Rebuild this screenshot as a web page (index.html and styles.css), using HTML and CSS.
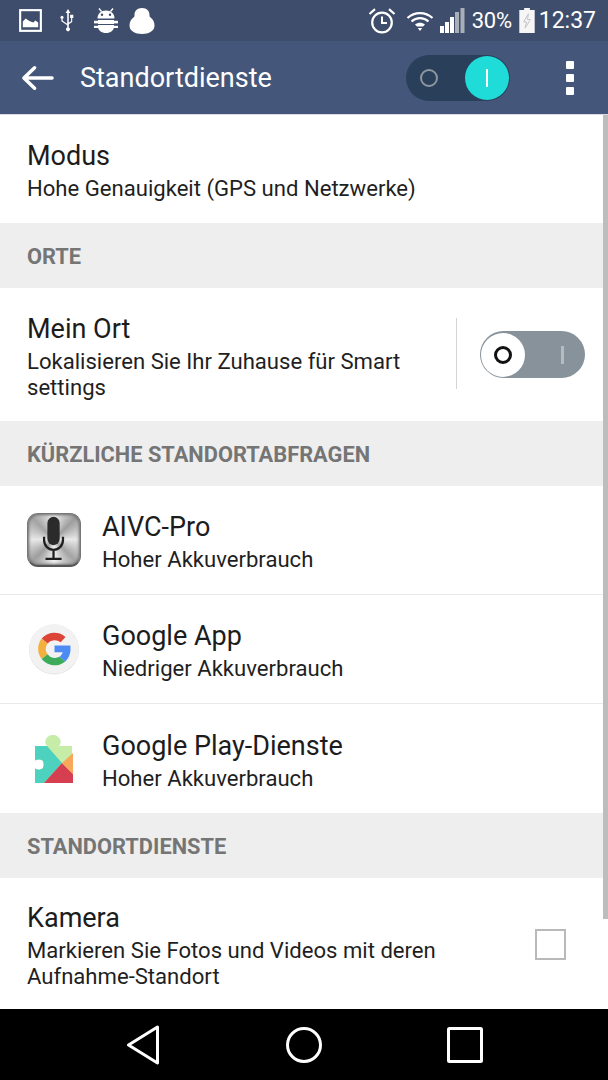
FILE: index.html
```html
<!DOCTYPE html>
<html lang="de">
<head>
  <meta charset="UTF-8" />
  <meta name="viewport" content="width=device-width, initial-scale=1.0"/>
  <title>Standortdienste</title>
  <link rel="stylesheet" href="styles.css">
</head>
<body>
  <div class="screen">
    <div class="status-bar">
      <div class="status-left">
        <svg class="ic-picture" viewBox="0 0 24 24"><rect x="1.2" y="1.2" width="21.6" height="21.6" fill="none" stroke="#fff" stroke-width="2.2"/><path d="M4 19v-6l3-3 3 2 2 1 3 1 2-2 3 2v5z" fill="#fff"/></svg>
        <svg class="ic-usb" viewBox="0 0 16 26"><path d="M8 1 5.6 5h1.6v14.5a1.9 1.9 0 1 0 1.6 0V16.2l3.4-2.2V10h1.1V6.8h-3.2V10h1v3.2l-2.3 1.5V5h1.6zM4.1 13.7 2.6 12.6v-1.9a1.5 1.5 0 1 0-1.2 0v2.5l5.8 4v-1.5z" fill="#fff"/></svg>
        <svg class="ic-bug" viewBox="0 0 24 26">
          <path d="M5 .5 7.500 3.500M19 .5 16.500 3.500" stroke="#fff" stroke-width="1.400" fill="none"/>
          <path d="M3.500 10.500C3.500 5.500 7 2.500 12 2.500s8.500 3 8.500 8z" fill="#fff"/>
          <circle cx="8" cy="6.800" r="1.200" fill="#3f4d6c"/>
          <circle cx="16" cy="6.800" r="1.200" fill="#3f4d6c"/>
          <path d="M4 12h16v6.500c0 4-3.500 6.500-8 6.500s-8-2.500-8-6.500z" fill="#fff"/>
          <rect x="0" y="12.800" width="24" height="2.600" fill="#fff"/>
          <rect x="0" y="17.800" width="24" height="2.200" fill="#fff"/>
          <rect x="4" y="16" width="16" height="1" fill="#3f4d6c"/>
        </svg>
        <svg class="ic-blob" viewBox="0 0 26 28"><path d="M13 1C18 1 20.500 4 20.500 8 20.500 9 20.500 9.500 21 10 24 12 25.500 15 25.500 18.500 25.500 24 20 27 13 27S.5 24 .5 18.500C.5 15 2 12 5 10 5.500 9.500 5.500 9 5.500 8 5.500 4 8 1 13 1z" fill="#fff"/></svg>
      </div>
      <div class="status-right">
        <svg class="ic-alarm" viewBox="0 0 28 28"><circle cx="14" cy="15.500" r="9.800" fill="none" stroke="#fff" stroke-width="2.200"/><path d="M14 9.500v6.500h5" fill="none" stroke="#fff" stroke-width="2"/><path d="M1.500 7 7 2.200M26.500 7 21 2.200" stroke="#fff" stroke-width="2.200" fill="none"/></svg>
        <svg class="ic-wifi" viewBox="0 0 28 22"><path d="M1.500 8C8.500 1.500 19.500 1.500 26.500 8M5.500 11.500C10.500 7 17.500 7 22.500 11.500" fill="none" stroke="#fff" stroke-width="2.200"/><path d="M9 14.500c3-2.400 7-2.400 10 0l-2 2h-6z" fill="#fff"/><path d="M11.800 18h4.400L14 21z" fill="#fff"/></svg>
        <svg class="ic-signal" viewBox="0 0 25 25"><rect x="0" y="18" width="4" height="7" fill="#fff"/><rect x="5" y="14" width="4" height="11" fill="#fff"/><rect x="10" y="9" width="4" height="16" fill="#fff"/><rect x="15" y="4" width="4" height="21" fill="#a8afb9"/><rect x="20.500" y="0" width="4" height="25" fill="#a8afb9"/></svg>
        <span class="status-text pct">30%</span>
        <svg class="ic-battery" viewBox="0 0 16 26"><path d="M5 0h6v2h5v24H0V2h5z" fill="#f6f6f6"/><path d="M9.500 6 4.500 14.500h3L6 21l5.500-9h-3z" fill="none" stroke="#bfc3c8" stroke-width="1"/></svg>
        <span class="status-text">12:37</span>
      </div>
    </div>

    <div class="app-bar">
      <svg class="ic-back" viewBox="0 0 34 26"><path d="M14 2.500 3 13l11 10.500M3.500 13H32" fill="none" stroke="#fff" stroke-width="3.600" stroke-linecap="round" stroke-linejoin="round"/></svg>
      <div class="app-title">Standortdienste</div>
      <div class="switch-on">
        <span class="switch-o"></span>
        <span class="switch-knob"><i></i></span>
      </div>
      <div class="overflow"><i></i><i></i><i></i></div>
    </div>

    <div class="content">
      <div class="row row-plain">
        <div class="row-title">Modus</div>
        <div class="row-sub">Hohe Genauigkeit (GPS und Netzwerke)</div>
      </div>

      <div class="section">ORTE</div>

      <div class="row row-action">
        <div class="row-body">
          <div class="row-title">Mein Ort</div>
          <div class="row-sub">Lokalisieren Sie Ihr Zuhause für Smart settings</div>
        </div>
        <div class="divider-v"></div>
        <div class="switch-off">
          <span class="off-knob"><i></i></span>
          <span class="off-bar"></span>
        </div>
      </div>

      <div class="section">KÜRZLICHE STANDORTABFRAGEN</div>

      <div class="app-row">
        <div class="metal-icon">
          <svg viewBox="0 0 54 54">
            <rect x="20" y="3" width="13" height="30" rx="6.500" fill="#2b2b2b"/>
            <path d="M16.500 24v3.500c0 6 4.500 10.500 10 10.500s10-4.500 10-10.500V24M26.500 38v9M18 47.500h17" fill="none" stroke="#1f1f1f" stroke-width="2.400"/>
          </svg>
        </div>
        <div class="row-body">
          <div class="row-title">AIVC-Pro</div>
          <div class="row-sub">Hoher Akkuverbrauch</div>
        </div>
      </div>
      <div class="app-row">
        <svg class="app-icon" viewBox="0 0 54 54">
          <circle cx="27" cy="27.500" r="25" fill="#dedede"/>
          <circle cx="27" cy="27" r="24.800" fill="#f2f2f2"/>
          <path d="M38.500 15A16.500 16.500 0 0 0 14.700 16.500L20.500 21.500a9.500 9.500 0 0 1 13.200-1.200z" fill="#db4437"/>
          <path d="M14.700 16.500a16.500 16.500 0 0 0 0 20.500l5.800-4.800a9.500 9.500 0 0 1 0-10.700z" fill="#f4b03e"/>
          <path d="M14.700 37a16.500 16.500 0 0 0 23.600 2.500L32.500 34.800A9.500 9.500 0 0 1 20.500 32.200z" fill="#3dab5a"/>
          <path d="M27.500 23.500H43.300c.8 6-.4 11.500-5 16L32.500 34.800c1.500-1.200 2.600-2.600 3.200-4.600h-8.200z" fill="#4c8bf5"/>
        </svg>
        <div class="row-body">
          <div class="row-title">Google App</div>
          <div class="row-sub">Niedriger Akkuverbrauch</div>
        </div>
      </div>
      <div class="app-row app-row-last">
        <svg class="app-icon" viewBox="0 0 54 54">
          <path d="M8 14h12c-1.500-2-2-3.500-1.500-5.500 1-3.500 4-5.500 7.500-5.500s6.500 2 7.500 5.500c.5 2 0 3.500-1.500 5.500h13v37H8V36.500c2.500 1.500 5.500 1.500 7.500 0 1.500-1.500 1.500-6.500 0-8-2-1.500-5-1.500-7.500 0z" fill="#c5eda8"/>
          <path d="M8 14h12l15 17-18 20H8V36.500c2.500 1.500 5.500 1.500 7.500 0 1.500-1.500 1.500-6.500 0-8-2-1.500-5-1.500-7.500 0z" fill="#4dd2bf"/>
          <path d="M35 31 46 42v9H17z" fill="#d63f50"/>
          <path d="M35 31 46 21v21z" fill="#f9a85b"/>
        </svg>
        <div class="row-body">
          <div class="row-title">Google Play-Dienste</div>
          <div class="row-sub">Hoher Akkuverbrauch</div>
        </div>
      </div>

      <div class="section">STANDORTDIENSTE</div>

      <div class="row row-action row-camera">
        <div class="row-body">
          <div class="row-title">Kamera</div>
          <div class="row-sub">Markieren Sie Fotos und Videos mit deren Aufnahme-Standort</div>
        </div>
        <div class="checkbox"></div>
      </div>

      <div class="scrollbar"></div>
    </div>

    <div class="nav-bar">
      <svg class="nav-back" viewBox="0 0 34 40"><path d="M31.500 2 2.500 20l29 18z" fill="none" stroke="#fff" stroke-width="3" stroke-linejoin="round"/></svg>
      <svg class="nav-home" viewBox="0 0 36 36"><circle cx="18" cy="18" r="16.500" fill="none" stroke="#fff" stroke-width="3"/></svg>
      <svg class="nav-recent" viewBox="0 0 36 36"><rect x="1.500" y="1.500" width="33" height="33" rx="1" fill="none" stroke="#fff" stroke-width="3"/></svg>
    </div>
  </div>
</body>
</html>
```

FILE: styles.css
```css
* {
  box-sizing: border-box;
}

body {
  margin: 0;
  font-family: Roboto, 'Noto Sans', sans-serif;
  background: #fff;
  color: #1a1a1a;
}

.screen {
  width: 608px;
  height: 1080px;
  display: flex;
  flex-direction: column;
  overflow: hidden;
}

svg {
  display: block;
  flex: none;
}

/* status bar */
.status-bar {
  height: 41px;
  background: #3f4d6c;
  display: flex;
  justify-content: space-between;
  align-items: center;
  padding: 0 12px 0 19px;
  color: #fff;
}

.status-left,
.status-right {
  display: flex;
  align-items: center;
}

.ic-picture { width: 23px; height: 23px; margin-right: 18px; }
.ic-usb { width: 16px; height: 26px; margin-right: 18px; }
.ic-bug { width: 24px; height: 26px; margin-right: 11px; }
.ic-blob { width: 26px; height: 28px; }

.ic-alarm { width: 28px; height: 28px; margin-right: 10px; }
.ic-wifi { width: 28px; height: 22px; margin-right: 6px; }
.ic-signal { width: 25px; height: 25px; margin-right: 7px; }
.ic-battery { width: 16px; height: 25px; margin: 0 4px 0 7px; }

.status-text {
  font-size: 23px;
  line-height: 41px;
  white-space: nowrap;
}

.pct { font-size: 22px; letter-spacing: -0.3px; }

/* app bar */
.app-bar {
  height: 74px;
  flex: none;
  background: #44577a;
  display: flex;
  align-items: center;
  padding: 0 34px 0 21px;
  border-bottom: 1px solid #d8dce2;
  color: #fff;
}

.ic-back { width: 33px; height: 26px; margin-right: 26px; }

.app-title {
  flex: 1;
  font-size: 27px;
  padding-top: 1px;
}

.switch-on {
  width: 104px;
  height: 46px;
  border-radius: 23px;
  background: #2a3f5a;
  display: flex;
  justify-content: space-between;
  align-items: center;
  padding: 0 1px 0 14px;
  margin-right: 56px;
}

.switch-o {
  width: 18px;
  height: 18px;
  border: 2.5px solid #8e979f;
  border-radius: 50%;
}

.switch-knob {
  width: 44px;
  height: 44px;
  border-radius: 50%;
  background: #1fdcd9;
  display: flex;
  justify-content: center;
  align-items: center;
}

.switch-knob i {
  width: 2px;
  height: 18px;
  background: #fff;
}

.overflow {
  display: flex;
  flex-direction: column;
  gap: 5px;
}

.overflow i {
  width: 8px;
  height: 8px;
  border-radius: 1px;
  background: #fff;
}

/* list */
.content {
  flex: 1;
  position: relative;
  overflow: hidden;
}

.row-title {
  font-size: 27px;
  line-height: 32px;
  color: #1c1c1c;
}

.row-sub {
  font-size: 22.1px;
  line-height: 26px;
  margin-top: 3px;
  color: #1f1f1f;
}

.row-plain {
  height: 108px;
  padding: 25px 27px 0;
}

.section {
  height: 65px;
  background: #eeeeee;
  color: #757575;
  font-size: 21.8px;
  font-weight: 700;
  padding: 1px 27px 0;
  display: flex;
  align-items: center;
}

.row-action {
  height: 133px;
  display: flex;
  align-items: center;
  padding: 0 23px 0 27px;
}

.row-action .row-body {
  flex: none;
  width: 410px;
  margin-top: 4px;
}

.divider-v {
  width: 1px;
  height: 71px;
  background: #d4d4d4;
  margin: -2px 23px 0 19px;
}

.switch-off {
  width: 105px;
  height: 47px;
  border-radius: 24px;
  background: #87929a;
  display: flex;
  align-items: center;
  justify-content: space-between;
  padding: 0 21px 0 1px;
}

.off-knob {
  width: 44px;
  height: 44px;
  border-radius: 50%;
  background: #fff;
  display: flex;
  justify-content: center;
  align-items: center;
}

.off-knob i {
  width: 18px;
  height: 18px;
  border: 3px solid #111;
  border-radius: 50%;
}

.off-bar {
  width: 3px;
  height: 18px;
  background: #b5bbbf;
}

.app-row {
  height: 109px;
  display: flex;
  align-items: center;
  padding: 0 27px;
  border-bottom: 1px solid #e8e8e8;
}

.app-row .row-body {
  margin-top: 3px;
}

.app-row-last {
  border-bottom: none;
}

.app-icon,
.metal-icon {
  width: 54px;
  height: 54px;
  flex: none;
  margin-right: 21px;
}

.metal-icon {
  border-radius: 11px;
  border: 1px solid #777;
  border-bottom: 2px solid #555;
  background: conic-gradient(#f0f0f0, #9e9e9e 45deg, #e8e8e8 90deg, #a4a4a4 135deg, #f2f2f2 180deg, #9e9e9e 225deg, #e8e8e8 270deg, #a4a4a4 315deg, #f0f0f0);
  box-shadow: inset 0 0 3px 1px #6b6b6b;
}

.metal-icon svg {
  width: 52px;
  height: 51px;
}

.row-camera {
  height: 131px;
  align-items: flex-start;
  padding-top: 24px;
}

.row-camera .row-body {
  width: 465px;
  margin-top: 0;
}

.checkbox {
  width: 31px;
  height: 31px;
  border: 2px solid #b9b9b9;
  margin: 27px 0 0 43px;
}

.scrollbar {
  position: absolute;
  right: 0;
  top: 0;
  width: 5px;
  height: 804px;
  background: #bdbdbd;
}

/* nav bar */
.nav-bar {
  height: 71px;
  flex: none;
  background: #000;
  display: flex;
  align-items: center;
  padding-left: 126px;
}

.nav-back { width: 34px; height: 40px; margin-right: 126px; }
.nav-home { width: 36px; height: 36px; margin-right: 125px; }
.nav-recent { width: 36px; height: 36px; }
```
